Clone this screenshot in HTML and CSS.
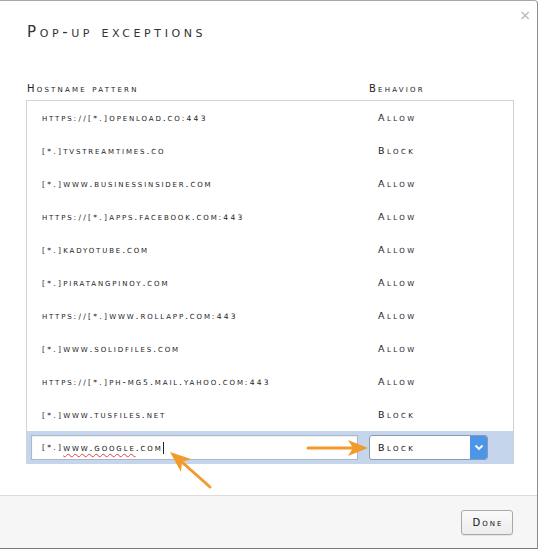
FILE: index.html
```html
<!DOCTYPE html>
<html>
<head>
<meta charset="utf-8">
<link rel="stylesheet" href="styles.css">
</head>
<body>
<div class="dialog">
  <div class="main">
    <div class="close">&#215;</div>
    <h1 class="title">Pop-up exceptions</h1>
    <div class="heads">
      <div class="col-host">Hostname pattern</div>
      <div class="col-beh">Behavior</div>
    </div>
    <div class="list">
      <div class="row"><div class="host">https<span class="sm">://[*.]</span>openload.co<span class="sm">:443</span></div><div class="beh">Allow</div></div>
      <div class="row"><div class="host"><span class="sm">[*.]</span>tvstreamtimes.co</div><div class="beh">Block</div></div>
      <div class="row"><div class="host"><span class="sm">[*.]</span>www.businessinsider.com</div><div class="beh">Allow</div></div>
      <div class="row"><div class="host">https<span class="sm">://[*.]</span>apps.facebook.com<span class="sm">:443</span></div><div class="beh">Allow</div></div>
      <div class="row"><div class="host"><span class="sm">[*.]</span>kadyotube.com</div><div class="beh">Allow</div></div>
      <div class="row"><div class="host"><span class="sm">[*.]</span>piratangpinoy.com</div><div class="beh">Allow</div></div>
      <div class="row"><div class="host">https<span class="sm">://[*.]</span>www.rollapp.com<span class="sm">:443</span></div><div class="beh">Allow</div></div>
      <div class="row"><div class="host"><span class="sm">[*.]</span>www.solidfiles.com</div><div class="beh">Allow</div></div>
      <div class="row"><div class="host">https<span class="sm">://[*.]</span>ph-mg<span class="sm">5</span>.mail.yahoo.com<span class="sm">:443</span></div><div class="beh">Allow</div></div>
      <div class="row"><div class="host"><span class="sm">[*.]</span>www.tusfiles.net</div><div class="beh">Block</div></div>
      <div class="row selected">
        <div class="input"><span class="sm">[*.]</span><span class="spell">www.google</span>.com<span class="caret"></span></div>
        <div class="select"><span class="sel-text">Block</span><span class="sel-btn"><svg width="10" height="7" viewBox="0 0 10 7"><path d="M1.5 1.5 L5 5 L8.5 1.5" fill="none" stroke="#fff" stroke-width="1.8"/></svg></span></div>
      </div>
    </div>
  </div>
  <div class="footer">
    <button class="done">Done</button>
  </div>
  <svg class="arrows" width="541" height="550" viewBox="0 0 541 550">
    <line x1="308" y1="448" x2="352" y2="448" stroke="#f39a2c" stroke-width="3" stroke-linecap="round"/>
    <path d="M368 448 L348 440 L353 448 L348 456 Z" fill="#f39a2c"/>
    <line x1="210" y1="487" x2="183" y2="463" stroke="#f39a2c" stroke-width="3" stroke-linecap="round"/>
    <path d="M170 452 L191 459 L182 462 L181 472 Z" fill="#f39a2c"/>
  </svg>
</div>
</body>
</html>
```

FILE: styles.css
```css
html, body {
  margin: 0;
  padding: 0;
  background: #ffffff;
}
body {
  font-family: "DejaVu Sans", "Liberation Sans", sans-serif;
  color: #222;
}
.dialog {
  position: relative;
  width: 537px;
  height: 547px;
  border-top: 1px solid #a8a8a8;
  border-right: 1px solid #8c8c8c;
  border-bottom: 1px solid #7a7a7a;
  border-top-right-radius: 4px;
  display: flex;
  flex-direction: column;
  box-sizing: content-box;
}
.main {
  position: relative;
  flex: 1;
  padding: 0 0 0 26px;
}
.close {
  position: absolute;
  right: 6px;
  top: 6px;
  font-size: 14px;
  color: #b3b3b3;
  font-family: "DejaVu Sans", sans-serif;
}
.title {
  margin: 0;
  padding-top: 22px;
  padding-left: 1px;
  font-size: 15px;
  font-weight: normal;
  font-variant: small-caps;
  letter-spacing: 3.6px;
  color: #333;
  line-height: 18px;
  height: 18px;
}
.heads {
  display: flex;
  margin-top: 42px;
  font-size: 10px;
  font-variant: small-caps;
  letter-spacing: 2.2px;
  color: #222;
  line-height: 12px;
  padding-left: 1px;
}
.col-host { width: 342px; }
.list {
  margin-top: 5px;
  width: 486px;
  border: 1px solid #d4d4d4;
  border-right-color: #cfcfcf;
  border-bottom: none;
  display: flex;
  flex-direction: column;
}
.row {
  display: flex;
  align-items: center;
  height: 33px;
  font-size: 9.5px;
  font-variant: small-caps;
  letter-spacing: 1.85px;
  color: #222;
}
.sm {
  font-size: 7.5px;
  letter-spacing: 2.3px;
}
.host {
  padding-left: 15px;
  width: 336px;
}
.beh {
  letter-spacing: 2.4px;
}
.row.selected {
  background: #c5d5ec;
  padding-left: 4px;
}
.input {
  box-sizing: border-box;
  width: 327px;
  height: 25px;
  background: #ffffff;
  border: 1px solid #aab8cf;
  box-shadow: inset 0 1px 2px rgba(0,0,0,0.08);
  padding-left: 10px;
  display: flex;
  align-items: center;
  color: #111;
}
.spell {
  text-decoration: underline wavy #e04040;
  text-decoration-thickness: 1px;
  text-underline-offset: 2px;
}
.caret {
  display: inline-block;
  width: 1px;
  height: 12px;
  background: #222;
}
.select {
  margin-left: 11px;
  box-sizing: border-box;
  width: 119px;
  height: 25px;
  border: 1px solid #8b9ab3;
  border-radius: 3px;
  background: #fff;
  display: flex;
  align-items: center;
  overflow: hidden;
  letter-spacing: 2.4px;
}
.sel-text {
  flex: 1;
  padding-left: 8px;
  color: #111;
}
.sel-btn {
  width: 17px;
  height: 100%;
  background: #4d95e8;
  display: flex;
  align-items: center;
  justify-content: center;
}
.footer {
  height: 52px;
  border-top: 1px solid #dcdcdc;
  background: #f6f6f6;
  display: flex;
  justify-content: flex-end;
  align-items: flex-start;
  padding-right: 24px;
}
.done {
  margin-top: 14px;
  width: 52px;
  height: 25px;
  border: 1px solid #a9a9a9;
  border-radius: 3px;
  background: linear-gradient(#fafafa, #ececec);
  font-family: "DejaVu Sans", sans-serif;
  font-size: 10px;
  font-variant: small-caps;
  letter-spacing: 2px;
  color: #111;
  padding: 0 0 0 2px;
  box-shadow: 0 1px 1px rgba(0,0,0,0.08);
}
.arrows {
  position: absolute;
  left: 0;
  top: -1px;
  pointer-events: none;
}
```
